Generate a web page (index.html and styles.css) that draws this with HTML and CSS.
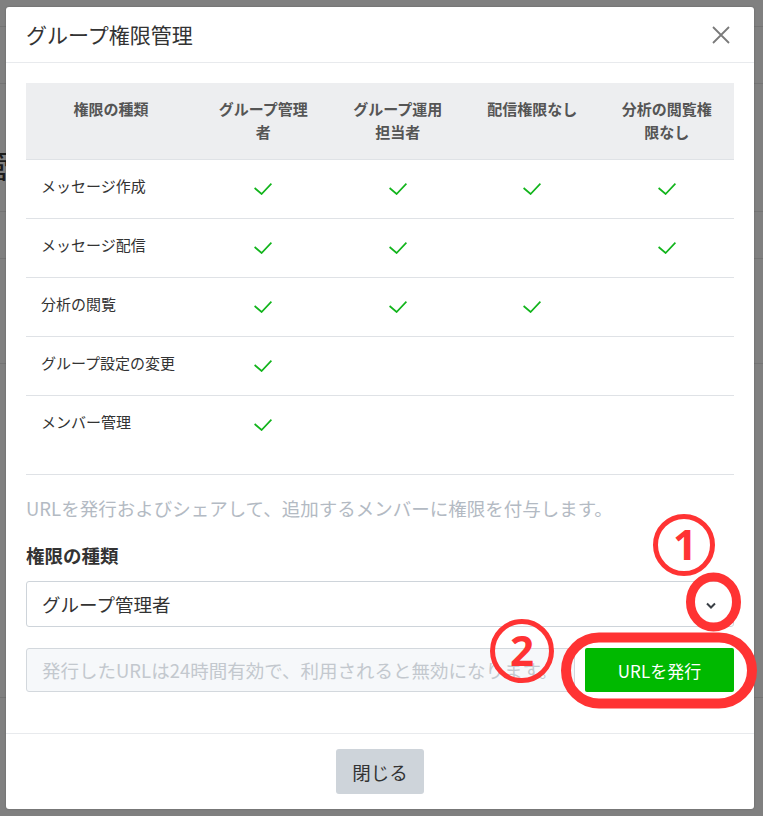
FILE: index.html
```html
<!DOCTYPE html>
<html lang="ja">
<head>
<meta charset="utf-8">
<title>グループ権限管理</title>
<link rel="stylesheet" href="styles.css">
</head>
<body>
<div class="page">
  <div class="page-row r1"></div>
  <div class="page-row r2"></div>
  <div class="page-row r3"><span class="page-glyph">管</span></div>
  <div class="page-row r4"></div>
  <div class="page-row r5"></div>
  <div class="page-row r6"></div>
</div>

<div class="modal">
  <div class="modal-header">
    <h1 class="modal-title">グループ権限管理</h1>
    <span class="close-btn">
      <svg width="20" height="20" viewBox="0 0 20 20"><path d="M2 2 L18 18 M18 2 L2 18" stroke="#7a7a7a" stroke-width="1.8" fill="none"/></svg>
    </span>
  </div>
  <div class="modal-body">
    <div class="table-wrap">
      <table class="perm-table">
        <colgroup>
          <col class="c-first"><col class="c-role"><col class="c-role"><col class="c-role"><col class="c-role">
        </colgroup>
        <thead>
          <tr>
            <th>権限の種類</th>
            <th>グループ管理者</th>
            <th>グループ運用<br>担当者</th>
            <th>配信権限なし</th>
            <th>分析の閲覧権限なし</th>
          </tr>
        </thead>
        <tbody>
          <tr>
            <td>メッセージ作成</td>
            <td><svg class="check" viewBox="0 0 18 12"><polyline points="0.6,5 7.6,11 17.4,0.6"/></svg></td>
            <td><svg class="check" viewBox="0 0 18 12"><polyline points="0.6,5 7.6,11 17.4,0.6"/></svg></td>
            <td><svg class="check" viewBox="0 0 18 12"><polyline points="0.6,5 7.6,11 17.4,0.6"/></svg></td>
            <td><svg class="check" viewBox="0 0 18 12"><polyline points="0.6,5 7.6,11 17.4,0.6"/></svg></td>
          </tr>
          <tr>
            <td>メッセージ配信</td>
            <td><svg class="check" viewBox="0 0 18 12"><polyline points="0.6,5 7.6,11 17.4,0.6"/></svg></td>
            <td><svg class="check" viewBox="0 0 18 12"><polyline points="0.6,5 7.6,11 17.4,0.6"/></svg></td>
            <td></td>
            <td><svg class="check" viewBox="0 0 18 12"><polyline points="0.6,5 7.6,11 17.4,0.6"/></svg></td>
          </tr>
          <tr>
            <td>分析の閲覧</td>
            <td><svg class="check" viewBox="0 0 18 12"><polyline points="0.6,5 7.6,11 17.4,0.6"/></svg></td>
            <td><svg class="check" viewBox="0 0 18 12"><polyline points="0.6,5 7.6,11 17.4,0.6"/></svg></td>
            <td><svg class="check" viewBox="0 0 18 12"><polyline points="0.6,5 7.6,11 17.4,0.6"/></svg></td>
            <td></td>
          </tr>
          <tr>
            <td>グループ設定の変更</td>
            <td><svg class="check" viewBox="0 0 18 12"><polyline points="0.6,5 7.6,11 17.4,0.6"/></svg></td>
            <td></td><td></td><td></td>
          </tr>
          <tr class="last">
            <td>メンバー管理</td>
            <td><svg class="check" viewBox="0 0 18 12"><polyline points="0.6,5 7.6,11 17.4,0.6"/></svg></td>
            <td></td><td></td><td></td>
          </tr>
        </tbody>
      </table>
    </div>

    <p class="desc">URLを発行およびシェアして、追加するメンバーに権限を付与します。</p>
    <div class="field-label">権限の種類</div>
    <div class="select">
      <span>グループ管理者</span>
      <svg class="chev" width="10" height="7" viewBox="0 0 10 7"><polyline points="1,1.5 5,5.5 9,1.5" fill="none" stroke="#3a3f45" stroke-width="2"/></svg>
    </div>
    <div class="url-row">
      <div class="url-input">発行したURLは24時間有効で、利用されると無効になります。</div>
      <button class="issue-btn">URLを発行</button>
    </div>
  </div>
  <div class="modal-footer">
    <button class="close-footer">閉じる</button>
  </div>
</div>

<svg class="annot" width="763" height="816" viewBox="0 0 763 816">
  <g fill="none" stroke="#ff3333">
    <circle cx="684" cy="545" r="28.5" stroke-width="5"/>
    <circle cx="522" cy="651" r="29.5" stroke-width="5"/>
    <ellipse cx="713.5" cy="602" rx="23" ry="25" stroke-width="9"/>
    <rect x="566" y="637.5" width="186" height="66" rx="33" ry="33" stroke-width="10"/>
  </g>
  <text x="685" y="560" class="annot-num">1</text>
  <text x="522" y="666" class="annot-num">2</text>
</svg>
</body>
</html>
```

FILE: styles.css
```css
html, body {
  margin: 0;
  padding: 0;
}
body {
  width: 763px;
  height: 816px;
  overflow: hidden;
  background: #808080;
  font-family: "Noto Sans CJK JP", "Noto Sans", sans-serif;
  color: #333;
}

/* dimmed page behind the dialog */
.page {
  display: flex;
  flex-direction: column;
}
.page-row {
  border-bottom: 1px solid #747474;
  box-sizing: border-box;
}
.r1 { height: 27px; }
.r2 { height: 57px; }
.r3 { height: 128px; overflow: hidden; }
.r4 { height: 47px; }
.r5 { height: 105px; }
.r6 { height: 334px; }
.page-glyph {
  display: block;
  margin: 64px 0 0 -22px;
  font-size: 32px;
  line-height: 32px;
  color: #1c1c1c;
}

/* dialog */
.modal {
  position: absolute;
  left: 6px;
  top: 7px;
  width: 748px;
  height: 802px;
  background: #fff;
  border-radius: 3px;
  box-shadow: 0 0 2px rgba(0,0,0,0.25);
  display: flex;
  flex-direction: column;
  box-sizing: border-box;
}
.modal-header {
  height: 56px;
  box-sizing: border-box;
  border-bottom: 1px solid #e8eaed;
  display: flex;
  align-items: center;
  justify-content: space-between;
  padding: 0 23px 0 20px;
}
.modal-title {
  margin: 0;
  font-size: 21px;
  font-weight: 400;
  color: #333;
  line-height: 30px;
  padding-bottom: 1px;
}
.close-btn {
  display: flex;
  width: 20px;
  height: 20px;
}

.modal-body {
  padding: 20px 20px 40px;
  flex: 1;
}
.table-wrap {
  border-bottom: 1px solid #dfe2e6;
}
.perm-table {
  width: 100%;
  border-collapse: collapse;
  table-layout: fixed;
}
.c-first { width: 170px; }
.c-role { width: 134.5px; }
.perm-table th {
  background: #edeef0;
  height: 76px;
  box-sizing: border-box;
  padding: 14px 18px 0;
  vertical-align: top;
  font-size: 15px;
  line-height: 23px;
  font-weight: 700;
  color: #555;
  text-align: center;
  border-bottom: 1px solid #dfe2e6;
}
.perm-table td {
  height: 59px;
  box-sizing: border-box;
  padding: 16px 15px 0;
  vertical-align: top;
  font-size: 15px;
  line-height: 20px;
  color: #333;
  border-bottom: 1px solid #dfe2e6;
}
.perm-table td + td {
  text-align: center;
}
.perm-table tr.last td {
  height: 79px;
  border-bottom: none;
}
.check {
  display: block;
  width: 18px;
  height: 12px;
  margin: 7px auto 0;
  fill: none;
  stroke: #11b41b;
  stroke-width: 1.7;
}

.desc {
  margin: 20px 0 0;
  font-size: 18.5px;
  line-height: 27px;
  color: #b3bac3;
}
.field-label {
  margin-top: 20px;
  font-size: 18.5px;
  line-height: 27px;
  font-weight: 700;
  color: #333;
}
.select {
  margin-top: 12px;
  height: 46px;
  box-sizing: border-box;
  border: 1px solid #ced4da;
  border-radius: 3px;
  display: flex;
  align-items: center;
  justify-content: space-between;
  padding: 0 17px 0 15px;
  font-size: 18.5px;
  color: #333;
}
.chev {
  display: block;
  margin-top: 3px;
}
.url-row {
  margin-top: 21px;
  display: flex;
  gap: 10px;
  height: 44px;
}
.url-input {
  flex: 1;
  box-sizing: border-box;
  border: 1px solid #d3d8dd;
  border-radius: 3px;
  background: #f6f8fa;
  display: flex;
  align-items: center;
  padding: 0 15px;
  font-size: 18.5px;
  color: #c3c8ce;
  white-space: nowrap;
  overflow: hidden;
}
.issue-btn {
  width: 149px;
  border: none;
  border-radius: 2px;
  background: #00b900;
  color: #fff;
  font-family: inherit;
  font-size: 17px;
  padding: 0;
}

.modal-footer {
  border-top: 1px solid #e8eaed;
  height: 76px;
  box-sizing: border-box;
  display: flex;
  justify-content: center;
  padding-top: 15px;
}
.close-footer {
  width: 88px;
  height: 45px;
  border: none;
  border-radius: 3px;
  background: #ced4da;
  color: #333;
  font-family: inherit;
  font-size: 18.5px;
  padding: 0;
}

/* red annotations drawn over the screenshot */
.annot {
  position: absolute;
  left: 0;
  top: 0;
  pointer-events: none;
}
.annot-num {
  font-family: "Noto Sans", "Liberation Sans", sans-serif;
  font-weight: 700;
  font-size: 42px;
  fill: #ff3333;
  text-anchor: middle;
}
```
